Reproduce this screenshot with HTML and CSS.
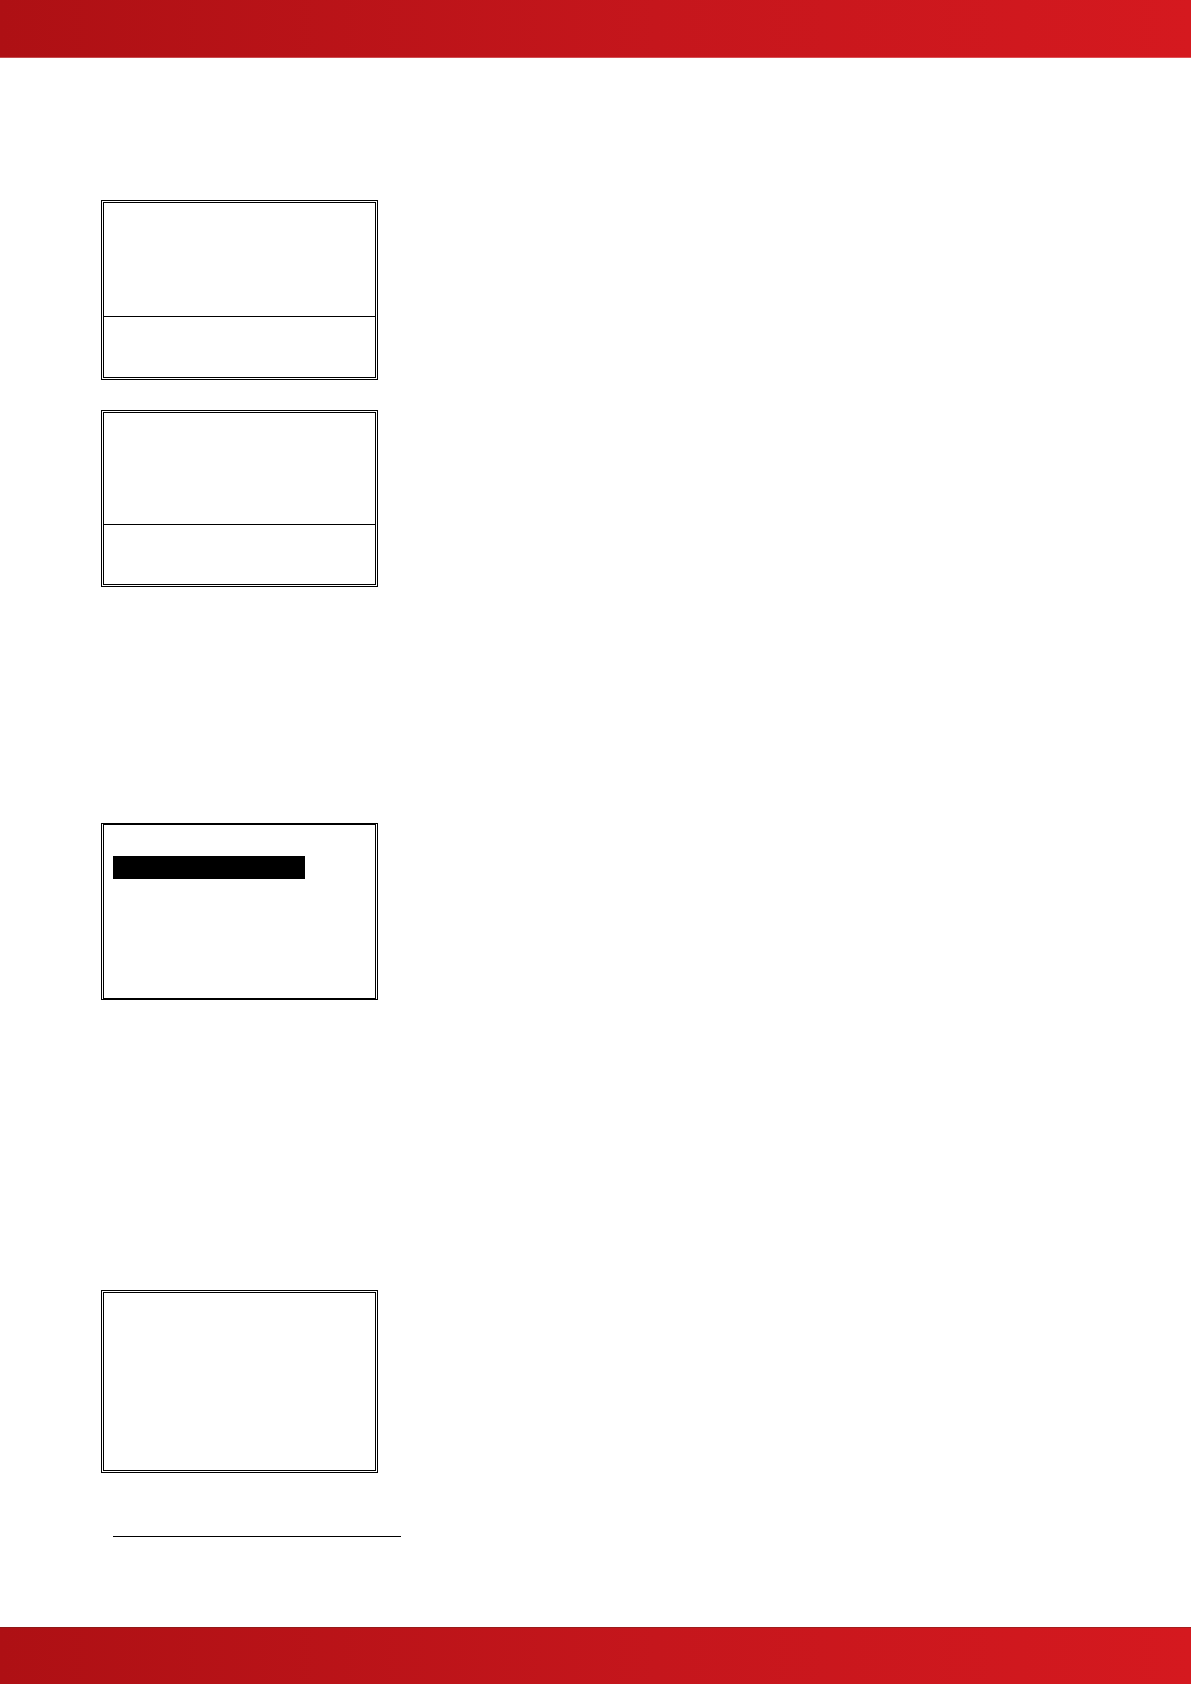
FILE: index.html
```html
<!DOCTYPE html>
<html lang="en">
<head>
  <meta charset="UTF-8">
  <meta name="viewport" content="width=device-width, initial-scale=1.0">
  <title>Display Panels</title>
  <link rel="stylesheet" href="styles.css">
</head>
<body>
  <header class="band band-top"></header>

  <main class="content">
    <div class="panel-group">
      <section class="panel panel-tall">
        <div class="panel-body"></div>
        <div class="panel-footer"></div>
      </section>
      <section class="panel">
        <div class="panel-body"></div>
        <div class="panel-footer"></div>
      </section>
    </div>

    <section class="panel panel-menu">
      <div class="menu-selected"></div>
    </section>

    <section class="panel panel-message"></section>

    <hr class="footnote-rule">
  </main>

  <footer class="band band-bottom"></footer>
</body>
</html>
```

FILE: styles.css
```css
:root {
  --red-dark: #ae1014;
  --red-mid: #c5161c;
  --red-light: #d5191f;
  --line: #000000;
}

* {
  box-sizing: border-box;
}

body {
  margin: 0;
  min-height: 100vh;
  display: flex;
  flex-direction: column;
  background: #ffffff;
  font-family: "Liberation Sans", sans-serif;
}

/* Red bands at the top and bottom of the page */
.band {
  flex-shrink: 0;
  background: linear-gradient(to right, var(--red-dark), var(--red-mid) 55%, var(--red-light)) border-box;
}

.band-top {
  height: 58px;
  border-bottom: 1px solid rgba(255, 255, 255, 0.25);
}

.band-bottom {
  height: 57px;
  border-top: 1px solid rgba(80, 40, 30, 0.35);
}

.content {
  flex: 1;
  padding: 142px 101px 90px;
}

.panel-group {
  display: flex;
  flex-direction: column;
  gap: 30px;
}

/* Display screens */
.panel {
  display: flex;
  flex-direction: column;
  width: 277px;
  max-width: 100%;
  min-height: 177px;
  border: 3px double var(--line);
}

.panel-tall {
  min-height: 180px;
}

.panel-body {
  flex: 1;
}

.panel-footer {
  height: 60px;
  border-top: 1px solid var(--line);
}

.panel-tall .panel-footer {
  height: 61px;
}

.panel-menu {
  margin-top: 236px;
  padding: 31px 9px;
  border-top: 2px solid var(--line);
  border-bottom: 2px solid var(--line);
}

.menu-selected {
  width: 192px;
  height: 23px;
  background: var(--line);
}

.panel-message {
  min-height: 183px;
  margin-top: 290px;
}

.footnote-rule {
  width: 288px;
  max-width: 100%;
  margin: 63px 0 0 12px;
  border: 0;
  border-top: 1px solid var(--line);
}
```
